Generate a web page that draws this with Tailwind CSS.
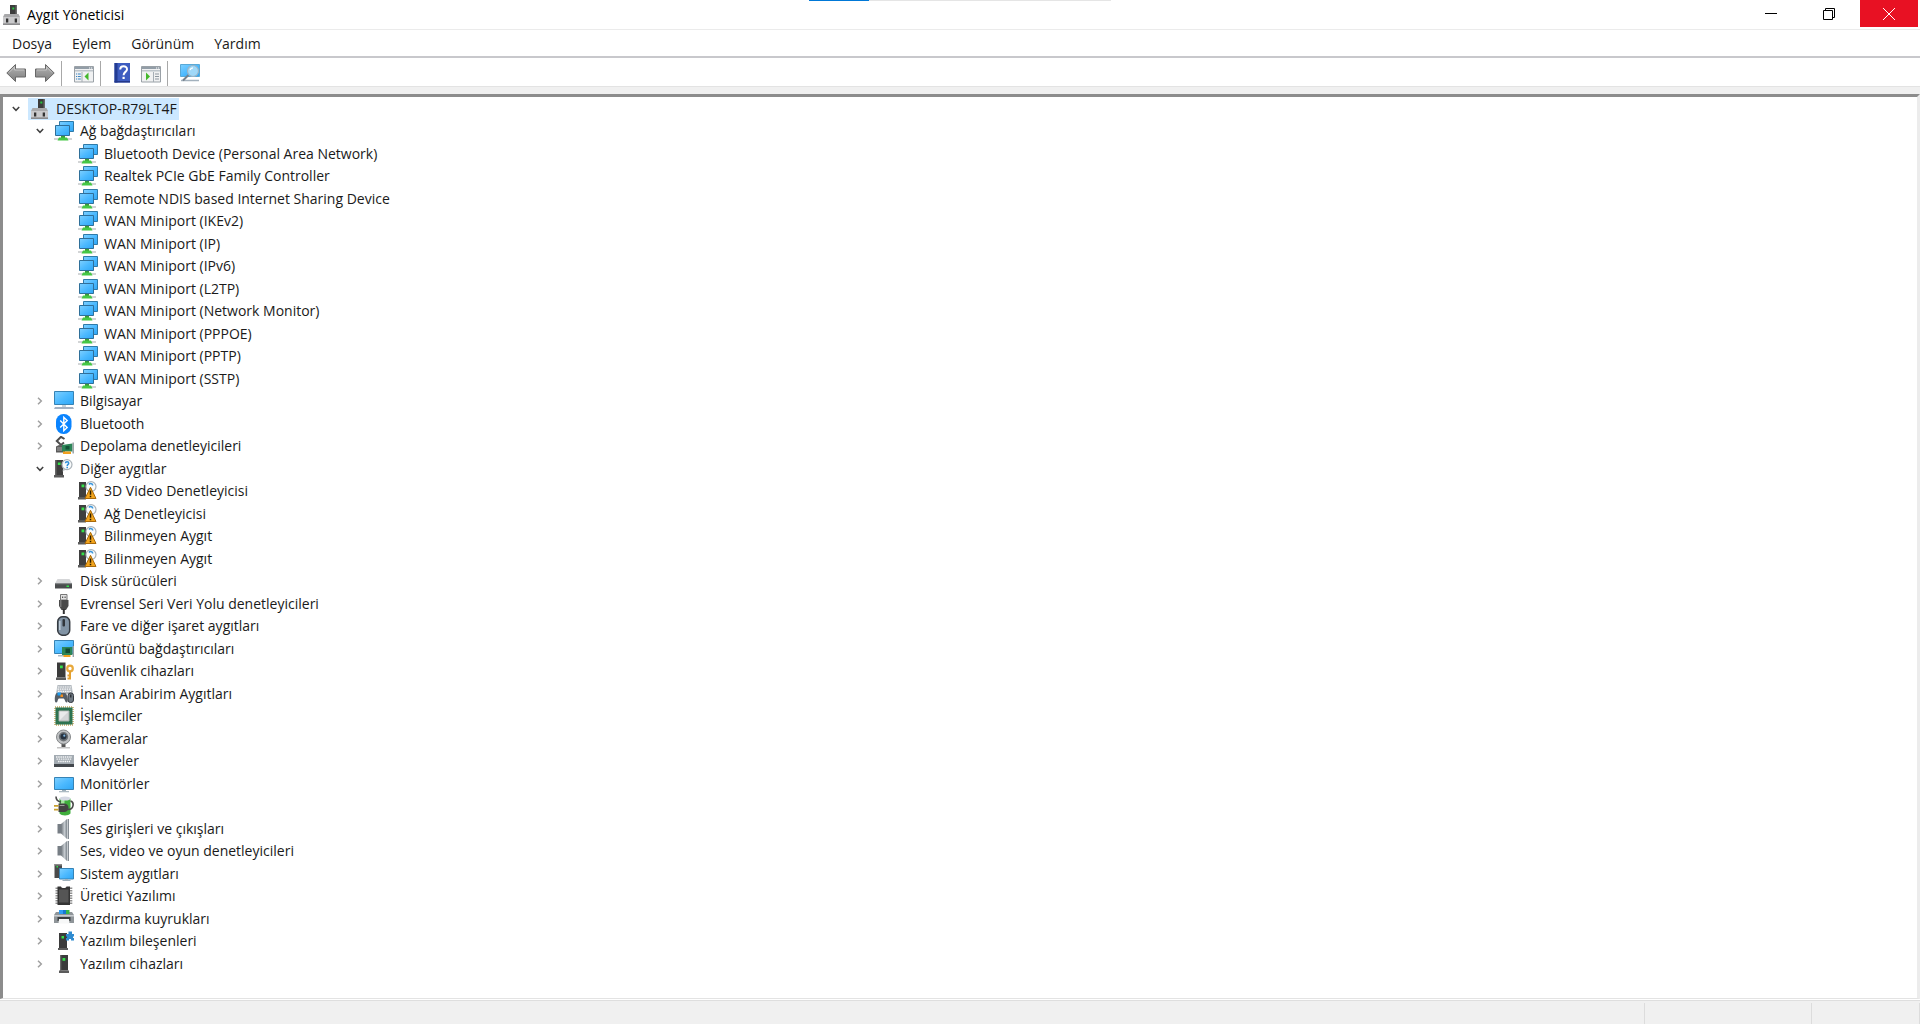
<!DOCTYPE html>
<html lang="tr">
<head>
    <meta charset="UTF-8">
    <meta name="viewport" content="width=device-width, initial-scale=1.0">
    <title>Aygıt Yöneticisi</title>
    <script src="https://cdn.jsdelivr.net/npm/@tailwindcss/browser@4"></script>
</head>
<body class="bg-white text-[#1a1a1a] font-['Open_Sans','Noto_Sans',sans-serif] text-sm min-h-screen flex flex-col overflow-x-hidden">

    <!-- Icon set -->
    <svg width="0" height="0" class="absolute" aria-hidden="true">
        <defs>
            <linearGradient id="screen" x1="0" y1="0" x2="1" y2="1">
                <stop offset="0" stop-color="#7fd0ff"/>
                <stop offset=".5" stop-color="#4dbaff"/>
                <stop offset="1" stop-color="#2fa6f5"/>
            </linearGradient>
            <linearGradient id="arrow" x1="0" y1="0" x2="0" y2="1">
                <stop offset="0" stop-color="#b5b5b5"/>
                <stop offset="1" stop-color="#7d7d7d"/>
            </linearGradient>
            <linearGradient id="cone" x1="0" y1="0" x2="1" y2="0">
                <stop offset="0" stop-color="#6e757b"/>
                <stop offset=".6" stop-color="#c6cbd0"/>
                <stop offset="1" stop-color="#7d858c"/>
            </linearGradient>
        </defs>

        <symbol id="i-pc" viewBox="0 0 20 20">
            <path d="M8 0h6.500v10H8z" fill="#3c3c3c"/>
            <path d="M13.500 0h1.500v10h-1.500z" fill="#6b6b6b"/>
            <path d="M10.300 2.500h2v2h-2z" fill="#28c840"/>
            <path d="M2.500 9h14l1.500 3v8H1v-8z" fill="#a9a9ab"/>
            <path d="M1 12h17v6.500H1z" fill="#c9c9cb"/>
            <path d="M1 18.500h17V20H1z" fill="#8b8b8d"/>
            <path d="M4 13.500h2.300v4H4zM12.700 13.500H15v4h-2.300z" fill="#333"/>
        </symbol>
        <symbol id="i-net" viewBox="0 0 20 20">
            <path d="M0 17h18v2H0z" fill="#d3d5d6"/>
            <path d="M5.500.5h14v10h-14z" fill="url(#screen)" stroke="#2f7aa8"/>
            <path d="M1.500 4.500h14v10h-14z" fill="url(#screen)" stroke="#2f6f99"/>
            <path d="M7 15h4v2H7z" fill="#3a9b3a"/>
            <path d="M5 16.500h8l1.500 3h-11z" fill="#45c745"/>
        </symbol>
        <symbol id="i-computer" viewBox="0 0 20 20">
            <path d="M.5.500h19v13H.5z" fill="url(#screen)" stroke="#3683b5"/>
            <path d="M8 14h4v2H8z" fill="#c9d3da"/>
            <path d="M1 16h18l1 2H0z" fill="#a3b1c2"/>
        </symbol>
        <symbol id="i-bluetooth" viewBox="0 0 20 20">
            <rect x="2" y="0" width="15.500" height="20" rx="7.500" fill="#0a84ff"/>
            <path d="M6.200 6.500l7 7-3.400 3.200V3.300l3.400 3.200-7 7" fill="none" stroke="#fff" stroke-width="1.400"/>
        </symbol>
        <symbol id="i-storage" viewBox="0 0 20 20">
            <path d="M10.500 3L7 .8 2.800 5 7 9l3-2.500" fill="none" stroke="#4d4d4d" stroke-width="2"/>
            <path d="M2 10.500l3-1.500 6 1v6.500H2z" fill="#5a5a5a"/>
            <path d="M3 12h5M3 14h5" stroke="#a5a5a5"/>
            <path d="M8 9l10.500-1.500v8H8z" fill="#2c8558"/>
            <path d="M11.500 10h4v3.500h-4z" fill="#135437"/>
            <path d="M19.200 6.500v11" stroke="#9aa3a6" stroke-width="1.500"/>
            <path d="M9 15.500h8v2.500H9z" fill="#f0a020"/>
        </symbol>
        <symbol id="i-other" viewBox="0 0 20 20">
            <path d="M1 1h8v15H1z" fill="#3f3f3f"/>
            <path d="M1 1h1.500v15H1z" fill="#686868"/>
            <path d="M0 16h10v2.500H0z" fill="#5b5b5b"/>
            <path d="M3.800 3.500h2.800v2.500H3.800z" fill="#35e04a"/>
            <path d="M9.500 8.500l-1 4 4-2z" fill="#c8cdd1"/>
            <circle cx="13" cy="5.600" r="5" fill="#fafcfd" stroke="#aab2b8" stroke-width="1.200"/>
            <path d="M11.500 4.200c0-2 3.200-2 3.200 0 0 1.200-1.500 1.200-1.500 2.700M13.200 7.800v1.400" fill="none" stroke="#2f8ed8" stroke-width="1.500"/>
        </symbol>
        <symbol id="i-warn" viewBox="0 0 20 20">
            <path d="M1 1h7v15H1z" fill="#3f3f3f"/>
            <path d="M0 16h8v2.500H0z" fill="#5b5b5b"/>
            <path d="M3.500 3.500h2.800v2.800H3.500z" fill="#35e04a"/>
            <circle cx="13" cy="5.600" r="5" fill="#fafcfd" stroke="#aab2b8" stroke-width="1.200"/>
            <path d="M11 3.500c1-1.500 4-1 3.500 1" fill="none" stroke="#3b97dc" stroke-width="1.500"/>
            <path d="M12.500 6.300L18 17.500H7z" fill="#f2a41c" stroke="#a8690b" stroke-linejoin="round"/>
            <path d="M12.500 9.500v4.200M12.500 14.800v1.500" stroke="#2b1c00" stroke-width="1.500"/>
        </symbol>
        <symbol id="i-disk" viewBox="0 0 20 20">
            <path d="M3.500 8h12l2.500 4.500H1z" fill="#d5d6d8"/>
            <path d="M1 12h17v5.500H1z" fill="#4a4c4e"/>
            <path d="M1 12h17v1.200H1z" fill="#85888a"/>
            <path d="M12.500 14.500h2.500v1.500h-2.500z" fill="#35e04a"/>
        </symbol>
        <symbol id="i-usb" viewBox="0 0 20 20">
            <path d="M6.500.5h6.500v5.500H6.500z" fill="#e3e3e3" stroke="#777"/>
            <path d="M8 2.500h1.200v1.500H8zM10.500 2.500h1.200v1.500h-1.200z" fill="#555"/>
            <path d="M5 6h9.500v6l-2.500 4H7.500L5 12z" fill="#4a4a4a"/>
            <path d="M6 6h1.500v7H6z" fill="#777"/>
            <path d="M8.800 15h2v5h-2z" fill="#333"/>
        </symbol>
        <symbol id="i-mouse" viewBox="0 0 20 20">
            <rect x="3.700" y=".7" width="12" height="18.600" rx="5" fill="#8294a5" stroke="#363b41" stroke-width="1.500"/>
            <path d="M5.800 5v9" stroke="#c1ced9" stroke-width="1.500"/>
            <rect x="8.500" y="3" width="2.500" height="7.500" rx="1" fill="#30353a"/>
        </symbol>
        <symbol id="i-display" viewBox="0 0 20 20">
            <path d="M.5 1.500h19v13H.5z" fill="url(#screen)" stroke="#3683b5"/>
            <path d="M4 16h6v1.500H4z" fill="#aebbc4"/>
            <path d="M8 8h10.500v8H8z" fill="#2c8558"/>
            <path d="M11.500 9.500h4.500v4.500h-4.500z" fill="#124b32"/>
            <path d="M19.300 7v11" stroke="#9aa3a6" stroke-width="1.400"/>
            <path d="M9.500 16h7v2h-7z" fill="#f0a020"/>
        </symbol>
        <symbol id="i-security" viewBox="0 0 20 20">
            <path d="M3 1.500h8.500v15H3z" fill="#3b3b3b"/>
            <path d="M2 16.500h10V19H2z" fill="#5b5b5b"/>
            <path d="M6 4.500h2.800v2.800H6z" fill="#35e04a"/>
            <circle cx="16" cy="7.500" r="2.800" fill="none" stroke="#e8a93c" stroke-width="2.200"/>
            <path d="M16 10v8.500M16 14.500h-2.500M16 17.500h-2.500" stroke="#e3a02f" stroke-width="2"/>
        </symbol>
        <symbol id="i-hid" viewBox="0 0 20 20">
            <path d="M3.500 1h14L19 10H2z" fill="#b4bac0"/>
            <path d="M4 3h13M3.500 5.200h14M4 7.300h13" stroke="#f8f9fa" stroke-width="1.200" stroke-dasharray="1.500 .8"/>
            <path d="M3 9h8c2.500 0 3.500 9 2 9.500-2 .5-2-4-3.500-4H5c-1.500 0-1 4.500-3 4C-.3 18 1 9 3 9z" fill="#565e66"/>
            <path d="M3.500 8.500h3.500v3H3.500z" fill="#1b9bf0"/>
            <path d="M6.500 10.500H9v2.500H6.500z" fill="#f08c1e"/>
            <rect x="14" y="9" width="5.500" height="9.500" rx="2.500" fill="#6f7983" stroke="#353a40"/>
            <path d="M16.800 10.500v3" stroke="#202428" stroke-width="1.200"/>
        </symbol>
        <symbol id="i-cpu" viewBox="0 0 20 20">
            <rect x="1" y="1" width="18" height="18" fill="none" stroke="#c2a45a" stroke-width="1.500" stroke-dasharray="1 1"/>
            <path d="M1.500 1.500h17v17h-17z" fill="#2d7350"/>
            <path d="M5 5h10v10H5z" fill="#d3d5d6" stroke="#a9b0ac"/>
            <path d="M5.500 14.500v-9h9z" fill="#e9eaea"/>
        </symbol>
        <symbol id="i-camera" viewBox="0 0 20 20">
            <path d="M3 18h13v1.500H3z" fill="#c2c2c2"/>
            <path d="M7.500 14.500h4V18h-4z" fill="#555"/>
            <circle cx="9.500" cy="8" r="7" fill="#bfc1c3" stroke="#85888a"/>
            <circle cx="9.500" cy="7.800" r="4.700" fill="#6d7276"/>
            <circle cx="9.500" cy="7.500" r="3" fill="#27323f"/>
            <circle cx="10.300" cy="6.700" r="1.100" fill="#7fb4dd"/>
        </symbol>
        <symbol id="i-keyboard" viewBox="0 0 20 20">
            <path d="M0 4h20v9H0z" fill="#a3abb2"/>
            <path d="M2 6h16M2.500 8.200h15M4 10.500h12" stroke="#f3f5f6" stroke-width="1.300" stroke-dasharray="1.500 .7"/>
            <path d="M0 13h20v3H0z" fill="#43484d"/>
        </symbol>
        <symbol id="i-monitor" viewBox="0 0 20 20">
            <path d="M.5 3.500h19v12H.5z" fill="url(#screen)" stroke="#3683b5"/>
            <path d="M8 16h4v1H8z" fill="#9fb0bb"/>
            <path d="M5 17h10v1.300H5z" fill="#aebbc4"/>
        </symbol>
        <symbol id="i-battery" viewBox="0 0 20 20">
            <path d="M5.500 2.500h11v15c-2 2.500-9 2.500-11 0z" fill="#3fae3c"/>
            <path d="M7 3.500h3.500v5H7z" fill="#9fe59a"/>
            <ellipse cx="11" cy="2.500" rx="5.300" ry="2" fill="#d5d9e4"/>
            <path d="M2 .5c0 3.500 2 5 5 5.500M14 13.500c6 0 6.500-7.500 2.500-8.500" fill="none" stroke="#4a4a4a" stroke-width="1.600"/>
            <path d="M4.500 7.500h5c3.500 0 5 2 5 4.200s-1.500 4.300-5 4.300h-5z" fill="#434343"/>
            <path d="M5.500 9.500h5" stroke="#9a9a9a"/>
            <path d="M0 9.800h4.500M0 13.700h4.500" stroke="#c9a02c" stroke-width="1.700"/>
        </symbol>
        <symbol id="i-speaker" viewBox="0 0 20 20">
            <path d="M3.500 5H7v9.500H3.500z" fill="#767d84"/>
            <path d="M7 5l6-5v20l-6-5.500z" fill="url(#cone)"/>
            <path d="M13 0h2v20h-2z" fill="#858c93"/>
            <path d="M13 0h.8v20H13z" fill="#d9dcdf"/>
        </symbol>
        <symbol id="i-system" viewBox="0 0 20 20">
            <path d="M.5 0h7.500v14H.5z" fill="#4a4a4a"/>
            <path d="M.5 0H8v1.500H.5z" fill="#8b8b8b"/>
            <path d="M2.500 2h1.500v1.500H2.500z" fill="#35e04a"/>
            <path d="M5.500 4.500h14v10.500h-14z" fill="url(#screen)" stroke="#3683b5"/>
            <path d="M11 15h3v1.500h-3zM8.500 16h8v1h-8z" fill="#9fb0bb"/>
        </symbol>
        <symbol id="i-firmware" viewBox="0 0 20 20">
            <path d="M3 1.500v17M16.800 1.500v17" stroke="#8f8f8f" stroke-width="3" stroke-dasharray="1.500 1"/>
            <path d="M3.500.5H7c.5 2 5 2 5.500 0H16v18.500H3.500z" fill="#343434"/>
            <path d="M5 3.500h9.500v13H5z" fill="#555"/>
        </symbol>
        <symbol id="i-printer" viewBox="0 0 20 20">
            <path d="M2 3h16l2 3v8H0V6z" fill="#8f9599"/>
            <path d="M0 6h20v1.500H0z" fill="#c9cdd0"/>
            <path d="M5 1h4v4H5z" fill="#2f9df4"/>
            <path d="M9 1h3v4H9z" fill="#1877d2"/>
            <path d="M12 1h3.500v4H12z" fill="#35b84a"/>
            <path d="M3.500 8h13v4h-13z" fill="#3b3f42"/>
            <path d="M5 10h10l.5 4.500h-11z" fill="#f7f8f8"/>
        </symbol>
        <symbol id="i-component" viewBox="0 0 20 20">
            <path d="M5 2h8v15H5z" fill="#3b3b3b"/>
            <path d="M4 17h10v2H4z" fill="#5b5b5b"/>
            <path d="M7.500 5h2.500v2.500H7.500z" fill="#35e04a"/>
            <path d="M12 3h2.500V.5h3.500V3h2v2.500h-1V7h1v2.500h-3V8h-2v1.500h-3V7h1V5.500h-1z" fill="#2f8bd0"/>
        </symbol>
        <symbol id="i-software" viewBox="0 0 20 20">
            <path d="M6 1h8v15.500H6z" fill="#3b3b3b"/>
            <path d="M6 1h1.300v15.500H6z" fill="#6a6a6a"/>
            <path d="M5 16.500h10V19H5z" fill="#5b5b5b"/>
            <path d="M8.500 4h2.800v2.800H8.500z" fill="#35e04a"/>
        </symbol>
    </svg>

    <!-- Progress strip over the title bar -->
    <div class="absolute top-0 left-1/2 -translate-x-1/2 w-[302px] h-px bg-[#e5e5e5]">
        <div class="w-[60px] h-px bg-[#0078d7]"></div>
    </div>

    <!-- Title bar -->
    <header class="h-[30px] flex items-start justify-between border-b border-[#ebebeb]">
        <div class="flex items-center gap-[5px] pl-[2px] h-[29px]">
            <svg class="w-5 h-5"><use href="#i-pc"/></svg>
            <h1 class="text-black">Aygıt Yöneticisi</h1>
        </div>
        <div class="flex pr-[2px]">
            <button aria-label="Simge durumuna küçült" class="w-[58px] h-[27px] grid place-items-center">
                <svg width="12" height="12"><path d="M0 5.500h12" stroke="#000"/></svg>
            </button>
            <button aria-label="Önceki boyut" class="w-[58px] h-[27px] grid place-items-center mr-[2px]">
                <svg width="12" height="12" fill="none" stroke="#000"><path d="M.5 2.500h9v9h-9zM2.500 2.500v-2h9v9h-2"/></svg>
            </button>
            <button aria-label="Kapat" class="w-[58px] h-[27px] grid place-items-center bg-[#e81123]">
                <svg width="12" height="12" stroke="#fff"><path d="M0 0l12 12M12 0L0 12"/></svg>
            </button>
        </div>
    </header>

    <!-- Menu -->
    <nav class="h-7 flex items-center pt-[2px] pl-[2px] border-b-2 border-[#c8c8cc]">
        <button class="px-[10px]">Dosya</button>
        <button class="px-[10px]">Eylem</button>
        <button class="px-[10px]">Görünüm</button>
        <button class="px-[10px]">Yardım</button>
    </nav>

    <!-- Toolbar -->
    <div role="toolbar" class="h-7 flex items-center pt-[2px] pl-[6px]">
        <button aria-label="Geri" class="mr-[9px]">
            <svg class="w-5 h-5" viewBox="0 0 20 20"><path d="M.8 10L9.500 1.500v4.500h10v8h-10v4.500z" fill="url(#arrow)" stroke="#686868" stroke-linejoin="round"/><path d="M3 9.500L8.500 4v3H18" fill="none" stroke="#c4c4c4"/></svg>
        </button>
        <button aria-label="İleri" class="mr-[6px]">
            <svg class="w-5 h-5" viewBox="0 0 20 20"><path d="M19.200 10L10.500 1.500v4.500H.5v8h10v4.500z" fill="url(#arrow)" stroke="#686868" stroke-linejoin="round"/><path d="M17 9.500L11.500 4v3H2" fill="none" stroke="#c4c4c4"/></svg>
        </button>
        <span class="w-px h-[25px] bg-[#a8a8a8] mr-3"></span>
        <button aria-label="Konsol ağacını göster" class="mr-[6px]">
            <svg class="w-5 h-5" viewBox="0 0 20 20">
                <path d="M.5 3.500h19v15.500H.5z" fill="#f0f1f2" stroke="#9aa1a7"/>
                <path d="M1 4h18v2H1z" fill="#929da7"/>
                <path d="M1 7h18v1.500H1z" fill="#bdc4ca"/>
                <path d="M15 5h1.200M17 5h1.200" stroke="#fff"/>
                <path d="M8 9v10" stroke="#a5adb4"/>
                <path d="M2 11h1.200M2 13.500h1.200M2 16h1.200M4 11h2.800M4 13.500h2.800M4 16h2.800" stroke="#3c86c2" stroke-width="1.200"/>
                <path d="M14.500 9.500v8L10.500 13.500z" fill="#44b82c"/>
            </svg>
        </button>
        <span class="w-px h-[25px] bg-[#a8a8a8] mr-[11px]"></span>
        <button aria-label="Yardım konuları" class="mr-[9px]">
            <svg class="w-5 h-5" viewBox="0 0 20 20">
                <path d="M2.500 0h15.500v19.500H2.500z" fill="#3d5cc0"/>
                <path d="M2.500 0h3v19.500h-3z" fill="#233c93"/>
                <path d="M2.500 18h15.500v1.500H2.500z" fill="#24388a"/>
                <path d="M8.200 6.500c0-4.200 6.800-4.200 6.800-.3 0 2.800-3.400 2.600-3.400 6" fill="none" stroke="#fff" stroke-width="2"/>
                <path d="M10.500 13.800h2.200V16h-2.200z" fill="#fff"/>
            </svg>
        </button>
        <button aria-label="Eylem bölmesini göster" class="mr-[6px]">
            <svg class="w-5 h-5" viewBox="0 0 20 20">
                <path d="M.5 3.500h19v15.500H.5z" fill="#f0f1f2" stroke="#9aa1a7"/>
                <path d="M1 4h18v2H1z" fill="#929da7"/>
                <path d="M1 7h18v1.500H1z" fill="#bdc4ca"/>
                <path d="M15 5h1.200M17 5h1.200" stroke="#fff"/>
                <path d="M12.500 9v10" stroke="#a5adb4"/>
                <path d="M14 11h4M14 13.500h4M14 16h4" stroke="#8d979f" stroke-width="1.200"/>
                <path d="M5 9.500v8l4-4z" fill="#44b82c"/>
            </svg>
        </button>
        <span class="w-px h-[25px] bg-[#a8a8a8] mr-3"></span>
        <button aria-label="Donanım değişikliklerini tara">
            <svg class="w-5 h-5" viewBox="0 0 20 20">
                <path d="M.5 1.500h19v12H.5z" fill="url(#screen)" stroke="#5aa9d6"/>
                <path d="M1 17.500h18" stroke="#a3b1bd" stroke-width="1.500"/>
                <path d="M8.500 12L3 17.500" stroke="#75818c" stroke-width="2"/>
                <circle cx="13" cy="8" r="5.500" fill="#9fd8f8" stroke="#9cb4c4" stroke-width="1.200"/>
                <path d="M10 7c.5-1.500 1.500-2.200 3-2.200" fill="none" stroke="#fff" stroke-width="1.200"/>
            </svg>
        </button>
    </div>
    <div class="h-2 bg-[#f0f0f0] border-t border-[#e3e3e3]"></div>

    <!-- Device tree -->
    <main class="flex-1 border-t-[3px] border-l-[3px] border-r-[3px] border-b border-t-[#8c8c8c] border-l-[#8c8c8c] border-r-[#ececec] border-b-[#e3e3e3]">
        <ul id="deviceTree" role="tree"></ul>
    </main>

    <!-- Status bar -->
    <footer class="h-6 mt-px pt-[2px] bg-[#f0f0f0] border-t border-[#dedede] flex justify-end">
        <div class="w-[167px] border-l border-[#dcdcdc]"></div>
        <div class="w-[109px] border-x border-[#dcdcdc]"></div>
    </footer>

    <script>
        // level, state (open / closed / none), icon, label
        const devices = [
            [0, "open", "pc", "DESKTOP-R79LT4F"],
            [1, "open", "net", "Ağ bağdaştırıcıları"],
            [2, "none", "net", "Bluetooth Device (Personal Area Network)"],
            [2, "none", "net", "Realtek PCIe GbE Family Controller"],
            [2, "none", "net", "Remote NDIS based Internet Sharing Device"],
            [2, "none", "net", "WAN Miniport (IKEv2)"],
            [2, "none", "net", "WAN Miniport (IP)"],
            [2, "none", "net", "WAN Miniport (IPv6)"],
            [2, "none", "net", "WAN Miniport (L2TP)"],
            [2, "none", "net", "WAN Miniport (Network Monitor)"],
            [2, "none", "net", "WAN Miniport (PPPOE)"],
            [2, "none", "net", "WAN Miniport (PPTP)"],
            [2, "none", "net", "WAN Miniport (SSTP)"],
            [1, "closed", "computer", "Bilgisayar"],
            [1, "closed", "bluetooth", "Bluetooth"],
            [1, "closed", "storage", "Depolama denetleyicileri"],
            [1, "open", "other", "Diğer aygıtlar"],
            [2, "none", "warn", "3D Video Denetleyicisi"],
            [2, "none", "warn", "Ağ Denetleyicisi"],
            [2, "none", "warn", "Bilinmeyen Aygıt"],
            [2, "none", "warn", "Bilinmeyen Aygıt"],
            [1, "closed", "disk", "Disk sürücüleri"],
            [1, "closed", "usb", "Evrensel Seri Veri Yolu denetleyicileri"],
            [1, "closed", "mouse", "Fare ve diğer işaret aygıtları"],
            [1, "closed", "display", "Görüntü bağdaştırıcıları"],
            [1, "closed", "security", "Güvenlik cihazları"],
            [1, "closed", "hid", "İnsan Arabirim Aygıtları"],
            [1, "closed", "cpu", "İşlemciler"],
            [1, "closed", "camera", "Kameralar"],
            [1, "closed", "keyboard", "Klavyeler"],
            [1, "closed", "monitor", "Monitörler"],
            [1, "closed", "battery", "Piller"],
            [1, "closed", "speaker", "Ses girişleri ve çıkışları"],
            [1, "closed", "speaker", "Ses, video ve oyun denetleyicileri"],
            [1, "closed", "system", "Sistem aygıtları"],
            [1, "closed", "firmware", "Üretici Yazılımı"],
            [1, "closed", "printer", "Yazdırma kuyrukları"],
            [1, "closed", "component", "Yazılım bileşenleri"],
            [1, "closed", "software", "Yazılım cihazları"]
        ];

        const indent = ["pl-[3px]", "pl-[27px]", "pl-[51px]"];
        const chevrons = {
            open: `<button aria-label="Daralt" class="w-5 h-5 grid place-items-center"><svg width="8" height="6" fill="none" stroke="#404040" stroke-width="1.500"><path d="M.8 1L4 4.300 7.200 1"/></svg></button>`,
            closed: `<button aria-label="Genişlet" class="w-5 h-5 grid place-items-center"><svg width="6" height="8" fill="none" stroke="#a0a0a0" stroke-width="1.500"><path d="M1 .8L4.300 4 1 7.200"/></svg></button>`,
            none: `<span class="w-5 h-5"></span>`
        };

        document.getElementById("deviceTree").innerHTML = devices.map(([level, state, icon, label]) => `
            <li role="treeitem" aria-level="${level + 1}" class="flex items-center h-[22px] odd:h-[23px] ${indent[level]}">
                ${chevrons[state]}
                <span class="flex items-center gap-[6px] h-[22px] ml-[2px] pl-[2px] pr-[2px] whitespace-nowrap ${level === 0 ? "bg-[#cce8ff]" : ""}">
                    <svg class="w-5 h-5"><use href="#i-${icon}"/></svg>
                    <span>${label}</span>
                </span>
            </li>`).join("");
    </script>
</body>
</html>
